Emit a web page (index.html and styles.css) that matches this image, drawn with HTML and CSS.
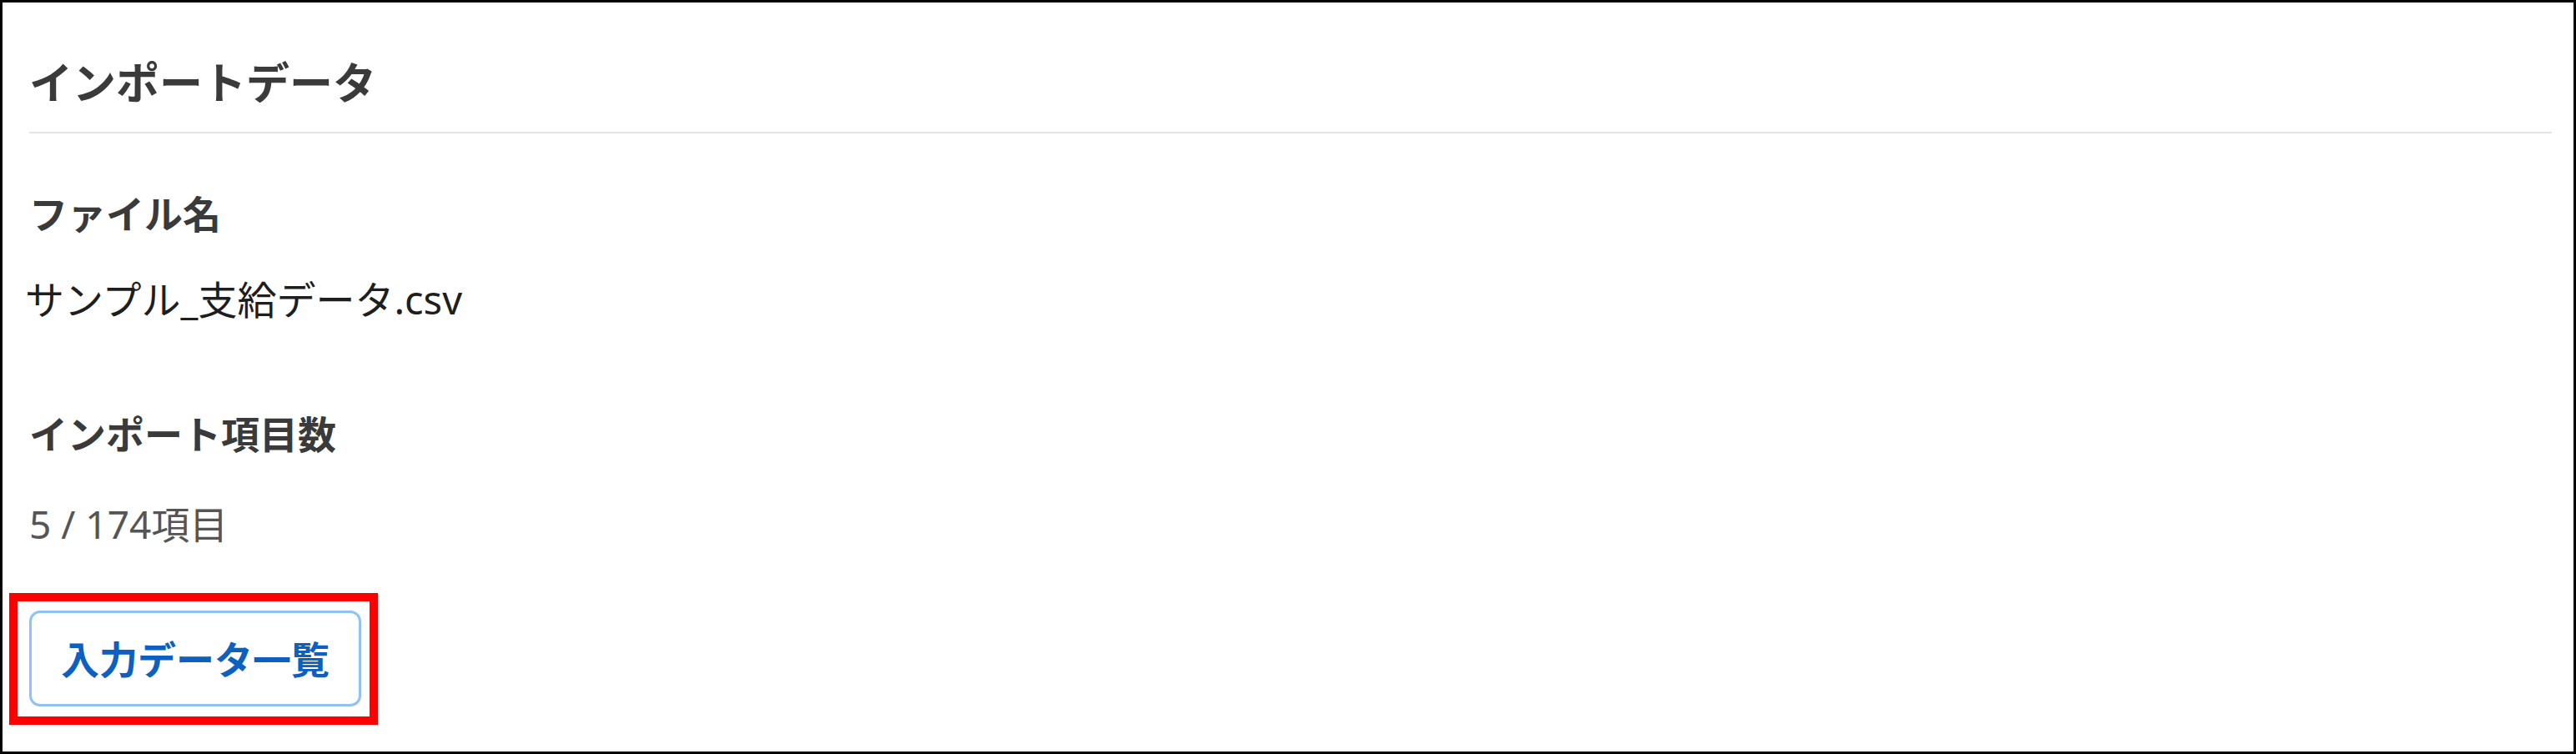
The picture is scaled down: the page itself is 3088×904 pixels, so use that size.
FILE: index.html
```html
<!DOCTYPE html>
<html lang="ja">
<head>
<meta charset="utf-8">
<title>インポートデータ</title>
<link rel="stylesheet" href="styles.css">
</head>
<body>
<section class="panel">
  <h2 class="panel-title">インポートデータ</h2>
  <hr class="divider">
  <div class="field">
    <div class="field-label">ファイル名</div>
    <div class="field-value file-name">サンプル_支給データ.csv</div>
  </div>
  <div class="field field-count">
    <div class="field-label">インポート項目数</div>
    <div class="field-value count">5 / 174項目</div>
  </div>
  <div class="highlight">
    <button class="btn-outline" type="button">入力データ一覧</button>
  </div>
</section>
</body>
</html>
```
FILE: styles.css
```css
* {
  box-sizing: border-box;
}

html, body {
  margin: 0;
  padding: 0;
  background: #ffffff;
}

body {
  font-family: "Noto Sans", "Noto Sans CJK JP", sans-serif;
  color: #333333;
}

.panel {
  width: 3088px;
  height: 904px;
  border: 3px solid #000000;
  padding: 57px 26px 0 32px;
  background: #ffffff;
}

.panel-title {
  margin: 0;
  font-size: 52px;
  line-height: 78px;
  font-weight: 700;
  color: #3a3a3a;
}

.divider {
  margin: 20px 0 0 0;
  border: 0;
  border-top: 2px solid #e4e4e4;
  height: 0;
}

.field {
  display: flex;
  flex-direction: column;
}

.field-label {
  margin-top: 63px;
  font-size: 46px;
  line-height: 66px;
  font-weight: 700;
  color: #3a3a3a;
}

.field-value {
  margin-top: 37px;
  line-height: 66px;
}

.file-name {
  font-size: 47px;
  color: #1e1e1e;
  margin-left: -5px;
}

.field-count .field-label {
  margin-top: 95px;
}

.count {
  margin-top: 42px;
  font-size: 46px;
  color: #555555;
}

.highlight {
  display: inline-block;
  margin: 50px 0 0 -24px;
  border: 10px solid #ff0000;
  padding: 11px 10px 12px 14px;
}

.btn-outline {
  display: block;
  width: 398px;
  height: 115px;
  border: 3px solid #90c2f6;
  border-radius: 13px;
  background: #ffffff;
  color: #0d5fc0;
  font-family: "Noto Sans", "Noto Sans CJK JP", sans-serif;
  font-size: 46px;
  font-weight: 700;
  padding: 0;
  line-height: 1;
}
```
